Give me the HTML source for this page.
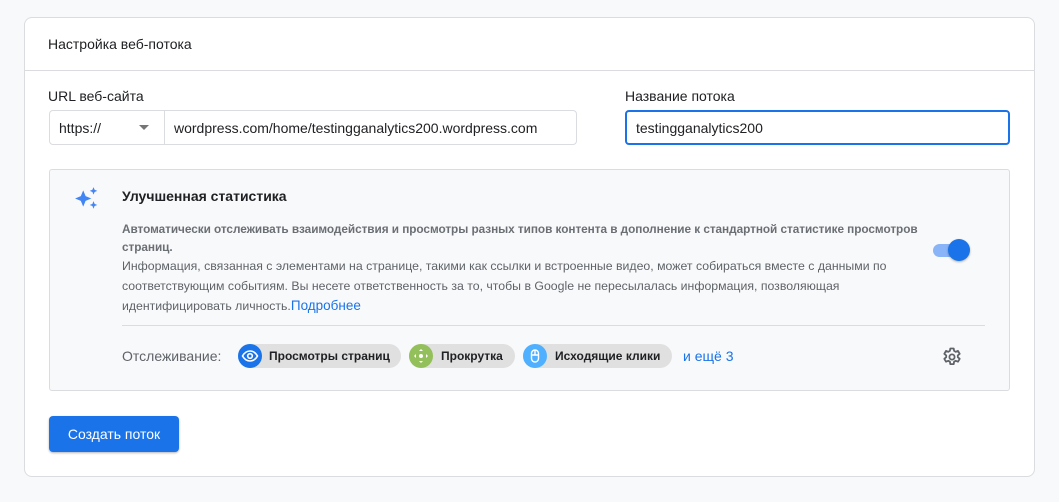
<!DOCTYPE html>
<html><head><meta charset="utf-8"><style>
*{box-sizing:border-box;margin:0;padding:0}
body{width:1059px;height:502px;background:#f8f9fa;font-family:"Liberation Sans",Arial,sans-serif;color:#202124;position:relative;overflow:hidden}
.card{position:absolute;left:24px;top:17px;width:1011px;height:460px;background:#fff;border:1px solid #dadce0;border-radius:8px}
.abs{position:absolute}
.t14{font-size:14px}
.chip{position:absolute;top:344px;height:24px;background:#e0e0e0;border-radius:12px;font-size:12px;font-weight:bold;color:#202124;line-height:24px}
.chip .ic{position:absolute;left:0;top:0;width:24px;height:24px;border-radius:12px}
</style></head><body>
<div class="card"></div>
<div class="abs t14" style="left:48px;top:36px">Настройка веб-потока</div>
<div class="abs" style="left:25px;top:70px;width:1009px;height:1px;background:#dadce0"></div>
<div class="abs t14" style="left:48px;top:88px">URL веб-сайта</div>
<div class="abs t14" style="left:625px;top:88px">Название потока</div>
<div class="abs" style="left:49px;top:110px;width:528px;height:35px;border:1px solid #dadce0;border-radius:4px"></div>
<div class="abs" style="left:164px;top:110px;width:1px;height:35px;background:#dadce0"></div>
<div class="abs t14" style="left:59px;top:120px">https://</div>
<div class="abs" style="left:139px;top:125px;width:0;height:0;border-left:5px solid transparent;border-right:5px solid transparent;border-top:5px solid #757575"></div>
<div class="abs t14" style="left:174px;top:120px">wordpress.com/home/testingganalytics200.wordpress.com</div>
<div class="abs" style="left:625px;top:110px;width:385px;height:35px;border:2px solid #1a73e8;border-radius:4px"></div>
<div class="abs t14" style="left:636px;top:120px">testingganalytics200</div>
<div class="abs" style="left:49px;top:169px;width:961px;height:222px;background:#f8f9fa;border:1px solid #dadce0;border-radius:3px"></div>
<svg class="abs" style="left:74px;top:186px" width="26" height="26" viewBox="0 0 24 24"><path fill="#4285f4" d="M8.5 4l2.2 5.3 5.3 2.2-5.3 2.2-2.2 5.3-2.2-5.3-5.3-2.2 5.3-2.2z M18 1l1 2.5 2.5 1-2.5 1-1 2.5-1-2.5-2.5-1 2.5-1z M18 14l1 2.5 2.5 1-2.5 1-1 2.5-1-2.5-2.5-1 2.5-1z"/></svg>
<div class="abs" style="left:122px;top:188px;font-size:14px;font-weight:bold">Улучшенная статистика</div>
<div class="abs" style="left:122px;top:220px;width:830px;font-size:12.3px;line-height:20px;color:#5f6368">
<div style="font-weight:bold;line-height:18px;font-size:11.8px;letter-spacing:-0.05px;width:815px;color:#6b6f74">Автоматически отслеживать взаимодействия и просмотры разных типов контента в дополнение к стандартной статистике просмотров страниц.</div>
<div>Информация, связанная с элементами на странице, такими как ссылки и встроенные видео, может собираться вместе с данными по соответствующим событиям. Вы несете ответственность за то, чтобы в Google не пересылалась информация, позволяющая идентифицировать личность.<span style="color:#1a73e8;font-size:13.5px">Подробнее</span></div></div>
<div class="abs" style="left:933px;top:244px;width:34px;height:13px;border-radius:7px;background:#8ab4f8"></div>
<div class="abs" style="left:948px;top:239px;width:22px;height:22px;border-radius:11px;background:#1a73e8;box-shadow:0 1px 2px rgba(0,0,0,.3)"></div>
<div class="abs" style="left:122px;top:325px;width:863px;height:1px;background:#dadce0"></div>
<div class="abs t14" style="left:122px;top:348px;color:#5f6368">Отслеживание:</div>
<div class="chip" style="left:238px;width:163px"><div class="ic" style="background:#1a73e8"><svg width="24" height="24" viewBox="0 0 24 24"><path fill="none" stroke="#fff" stroke-width="1.6" d="M4.5 12c2-3.5 4.5-5 7.5-5s5.5 1.5 7.5 5c-2 3.5-4.5 5-7.5 5s-5.5-1.5-7.5-5z"/><circle cx="12" cy="12" r="2.3" fill="none" stroke="#fff" stroke-width="1.6"/></svg></div><span style="margin-left:31px">Просмотры страниц</span></div>
<div class="chip" style="left:409px;width:106px"><div class="ic" style="background:#93c05a"><svg width="24" height="24" viewBox="0 0 24 24"><circle cx="12" cy="12" r="2" fill="#fff"/><path fill="#fff" d="M12 5l2 2h-4zM12 19l2-2h-4zM5 12l2-2v4zM19 12l-2-2v4z"/></svg></div><span style="margin-left:32px">Прокрутка</span></div>
<div class="chip" style="left:523px;width:149px"><div class="ic" style="background:#4fb0ff"><svg width="24" height="24" viewBox="0 0 24 24"><rect x="8.5" y="6" width="7" height="12" rx="3.5" fill="none" stroke="#fff" stroke-width="1.4"/><path stroke="#fff" stroke-width="1.4" d="M8.5 11h7M12 6v5"/></svg></div><span style="margin-left:32px">Исходящие клики</span></div>
<div class="abs t14" style="left:683px;top:348px;color:#1a73e8">и ещё 3</div>
<svg class="abs" style="left:940px;top:345px" width="24" height="24" viewBox="0 0 24 24"><path fill="none" stroke="#5f6368" stroke-width="1.8" stroke-linejoin="round" d="M10.3 3.5h3.4l.4 2.4 1.6.9 2.3-.9 1.7 2.9-1.9 1.6v1.8l1.9 1.6-1.7 2.9-2.3-.9-1.6.9-.4 2.4h-3.4l-.4-2.4-1.6-.9-2.3.9-1.7-2.9 1.9-1.6v-1.8l-1.9-1.6 1.7-2.9 2.3.9 1.6-.9z"/><circle cx="12" cy="12" r="2.6" fill="none" stroke="#5f6368" stroke-width="1.8"/></svg>
<div class="abs" style="left:49px;top:416px;width:130px;height:36px;background:#1a73e8;border-radius:4px;color:#fff;font-size:14px;line-height:36px;text-align:center;box-shadow:0 1px 2px rgba(0,0,0,.3)">Создать поток</div>
</body></html>
